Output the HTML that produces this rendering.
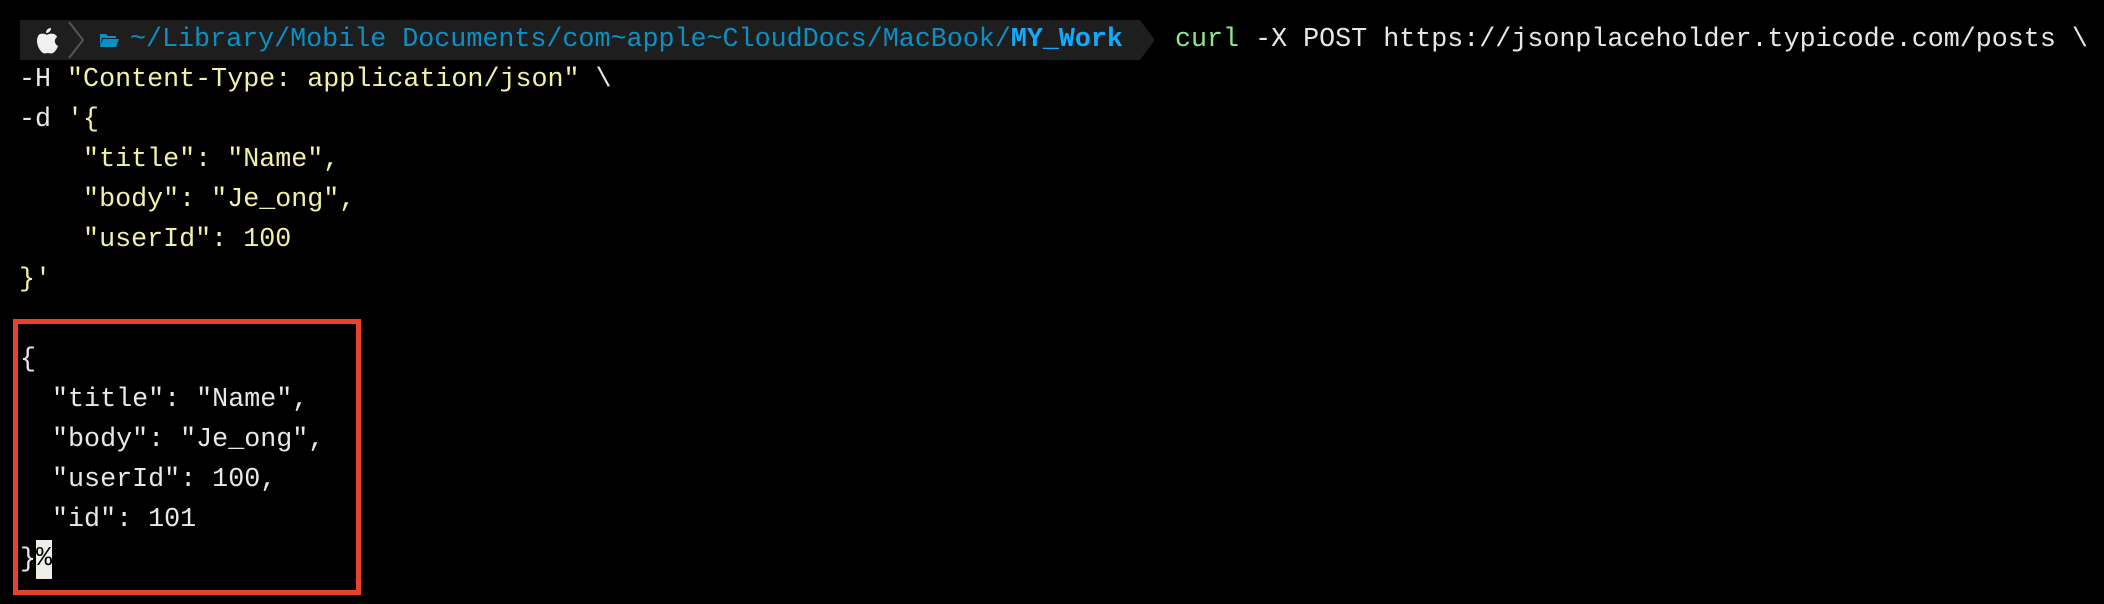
<!DOCTYPE html>
<html><head><meta charset="utf-8"><style>
html,body{margin:0;padding:0;background:#000;width:2104px;height:604px;overflow:hidden}
.t{position:absolute;font-family:"Liberation Mono","DejaVu Sans Mono",monospace;font-size:26.7px;line-height:40px;white-space:pre;color:#e8e8e8}
.y{color:#f2f2a6}
.g{color:#8fe88f}
.p{color:#0c90c4}
.b{color:#10aaff;font-weight:bold}
</style></head><body>
<svg style="position:absolute;left:0;top:0" width="1160" height="70">
<polygon points="20,20 1140,20 1155,40 1140,60 20,60" fill="#1e1e1e"/>
<path d="M40 34c3-1 6 0 7 1 1-1 4-2 7-1 2 1 3 2 3 3-3 2-3 7 1 9-1 3-3 6-5 7-2 1-3 0-5 0s-3 1-5 0c-3-2-6-7-6-12 0-3 1-6 3-7zM46 33c0-3 2-5 5-5 0 3-2 5-5 5z" fill="#f0f0f0"/>
<polyline points="69,22 83,40 69,58" fill="none" stroke="#555" stroke-width="2"/>
<path d="M100 34h6l2 2h8v2h-14l-2 9zM103 39h16l-3 8h-16z" fill="#0c90c4"/>
</svg>
<div class="t" style="left:130px;top:20px"><span class="p">~/Library/Mobile Documents/com~apple~CloudDocs/MacBook/</span><span class="b">MY_Work</span></div>
<div class="t" style="left:1175px;top:20px"><span class="g">curl</span> -X POST https://jsonplaceholder.typicode.com/posts \</div>
<div class="t y" style="left:19px;top:60px"><span style="color:#e8e8e8">-H</span> "Content-Type: application/json" <span style="color:#e8e8e8">\</span>
<span style="color:#e8e8e8">-d</span> '{
    "title": "Name",
    "body": "Je_ong",
    "userId": 100
}'</div>
<div style="position:absolute;left:13px;top:319px;width:338px;height:266px;border:5px solid #e8412c"></div>
<div class="t" style="left:20px;top:340px">{
  "title": "Name",
  "body": "Je_ong",
  "userId": 100,
  "id": 101
}</div>
<div class="t" style="left:36px;top:540px;width:16px;height:39px;background:#eeeee8;color:#000;line-height:39px">%</div>
</body></html>
